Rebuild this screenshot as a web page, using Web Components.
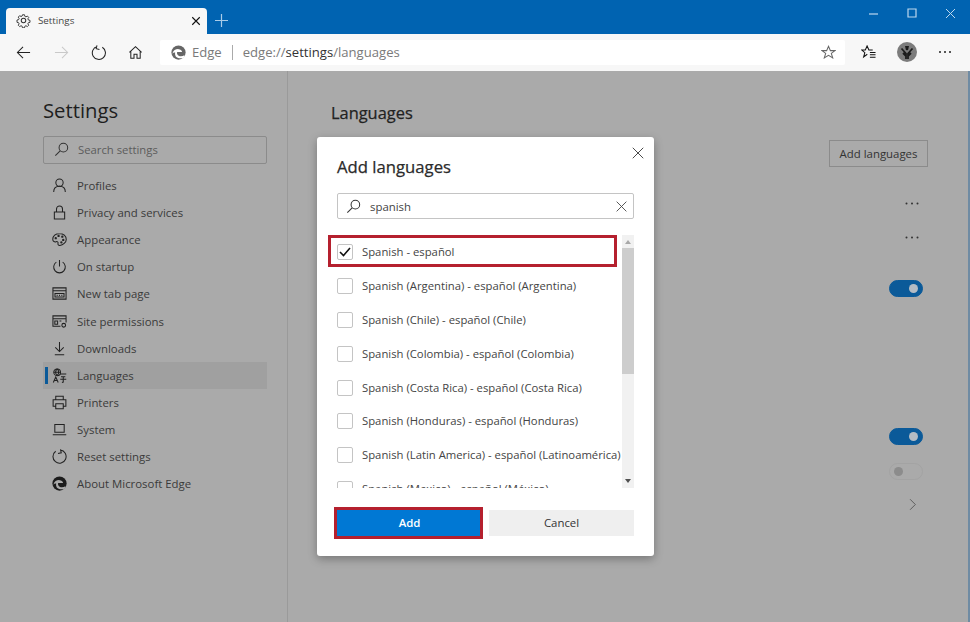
<!DOCTYPE html>
<html>
<head>
<meta charset="utf-8">
<title>Settings</title>
<style>
html, body { margin: 0; height: 100%; overflow: hidden; }
body { font-family: "Open Sans", "Noto Sans", sans-serif; background: #aaa; }
</style>
</head>
<body>
<edge-browser>
    <settings-nav slot="nav" heading="Settings">
        <nav-item icon="profile">Profiles</nav-item>
        <nav-item icon="lock">Privacy and services</nav-item>
        <nav-item icon="palette">Appearance</nav-item>
        <nav-item icon="power">On startup</nav-item>
        <nav-item icon="newtab">New tab page</nav-item>
        <nav-item icon="site">Site permissions</nav-item>
        <nav-item icon="download">Downloads</nav-item>
        <nav-item icon="language" selected>Languages</nav-item>
        <nav-item icon="printer">Printers</nav-item>
        <nav-item icon="system">System</nav-item>
        <nav-item icon="reset">Reset settings</nav-item>
        <nav-item icon="edge">About Microsoft Edge</nav-item>
    </settings-nav>
    <languages-panel slot="main"></languages-panel>
    <add-dialog slot="dialog">
        <lang-row checked marked>Spanish - español</lang-row>
        <lang-row>Spanish (Argentina) - español (Argentina)</lang-row>
        <lang-row>Spanish (Chile) - español (Chile)</lang-row>
        <lang-row>Spanish (Colombia) - español (Colombia)</lang-row>
        <lang-row>Spanish (Costa Rica) - español (Costa Rica)</lang-row>
        <lang-row>Spanish (Honduras) - español (Honduras)</lang-row>
        <lang-row>Spanish (Latin America) - español (Latinoamérica)</lang-row>
        <lang-row>Spanish (Mexico) - español (México)</lang-row>
    </add-dialog>
</edge-browser>

<script>
const icons = {
    gear: '<circle cx="8" cy="8" r="2.4"/><path d="M6.8 1.2h2.4l.4 1.9 1.3.6 1.7-1 1.6 1.7-1 1.6.6 1.4 1.9.4v2.4l-1.9.4-.6 1.3 1 1.7-1.6 1.6-1.7-1-1.3.6-.4 1.9H6.8l-.4-1.9-1.3-.6-1.7 1-1.6-1.6 1-1.7-.6-1.3-1.9-.4V7.4l1.9-.4.6-1.4-1-1.6 1.6-1.7 1.7 1 1.3-.6z" transform="translate(.8 .8) scale(.9)"/>',
    back: '<path d="M15 8H1.5M7.5 2 1.5 8l6 6"/>',
    forward: '<path d="M1 8h13.5M8.5 2l6 6-6 6"/>',
    refresh: '<path d="M10.6 1.6A7 7 0 1 1 5 2.2M4.6 1v3.6H8.2" transform="rotate(14 8 8)"/>',
    home: '<path d="M1.5 7.8 8 1.8l6.5 6M3 6.8v7.4h3.4v-4.4h3.2v4.4H13V6.8"/>',
    star: '<path d="M8 1.4 10 6h4.9l-3.9 3 1.5 4.800L8 11l-4.500 2.800L5 9 1.100 6H6z"/>',
    favorites: '<path d="M12.500 5.400H8.400L6.500 1 4.600 5.400H.8l3.300 2.700-1.300 4.600 3.900-2.800"/><path d="M9.500 8h6M9.500 10.500h6M9.500 13h6"/>',
    close: '<path d="m2 2 12 12M14 2 2 14"/>',
    search: '<circle cx="10" cy="6" r="4.600"/><path d="M6.600 9.400 1.400 14.600"/>',
    profile: '<circle cx="8" cy="5" r="3.900"/><path d="M1.800 15c0-3.600 2.400-6.200 6.200-6.200s6.200 2.600 6.200 6.200"/>',
    lock: '<path d="M2.500 7.500h11v7.500h-11zM4.800 7.500V4.200a3.200 3.200 0 0 1 6.400 0v3.300"/>',
    palette: '<path d="M8 1.500C3.800 1.500.8 4.200.8 7.600c0 2.600 2.200 3.400 3.600 2.800 1.200-.5 2.400.2 2 1.600-.4 1.400.6 2.500 2 2.300 3.200-.4 6.800-3 6.800-6.400 0-3.600-3-6.400-7.200-6.400z"/><circle cx="4" cy="6.600" r=".7"/><circle cx="7" cy="4.200" r=".7"/><circle cx="11" cy="5" r=".7"/><circle cx="12" cy="8.400" r=".7"/><circle cx="10" cy="11" r=".7"/>',
    power: '<path d="M8 1v7M4.600 3.400a6.200 6.200 0 1 0 6.800 0"/>',
    newtab: '<path d="M1 2h14v12H1zM1 5h14M3.200 8h9.600v3.800H3.200z"/><path d="M5 10h1M7.500 10h1M10 10h1"/>',
    site: '<path d="M9 13H1V2h14v7M1 5h14M3 7.500h3v3.500H3zM8 7.500h2"/><circle cx="12.500" cy="12" r="2"/>',
    download: '<path d="M8 1v10M3.500 6.800 8 11.200l4.500-4.400M3 14.600h10"/>',
    language: '<circle cx="5.500" cy="4.600" r="3.600"/><path d="M2 4.600h7M5.500 1c-2 2-2 5 0 7.200M5.500 1c2 2 2 5 0 7.200M1.400 15.400 4 9.600l2.600 5.800M2.400 13.400h3.200M8.400 6.400h6.800M9.600 9.400h4.600M8.800 12h6.400M12 9.400v5.600l-1.400.4"/>',
    printer: '<path d="M4 5V1.400h8V5M4 12H1.200V5h13.600v7H12M4 9.400h8v5.200H4z"/>',
    system: '<path d="M3 2.600h10v8.400H3zM.8 13.600h14.400"/>',
    reset: '<path d="M5.400 1.600A7 7 0 1 0 10.600 1.600M10.800 1v3.600H7.200" transform="rotate(-14 8 8)"/>',
    chevron: '<path d="m5 1.500 6.500 6.500L5 14.500"/>'
};

function svgIcon(name, size, stroke, width) {
    return `<svg viewBox="0 0 16 16" width="${size}" height="${size}" fill="none" stroke="${stroke || 'currentColor'}" stroke-width="${width || 1.1}" aria-hidden="true">${icons[name]}</svg>`;
}

function edgeLogo(size, color, cut) {
    return `<svg viewBox="0 0 16 16" width="${size}" height="${size}" aria-hidden="true"><circle cx="8" cy="8" r="7.6" fill="${color}"/><path d="M1.4 9.2C2.4 5.6 5.4 4.2 8 4.4c2.4.2 3.8 1.6 3.8 3H6.6c-.8 2.4 1.2 4.6 4 4.6 1.4 0 2.6-.4 3.6-1v2.2C10 15.4 3.4 14.2 4.4 8 3 8 2 8.4 1.4 9.2z" fill="${cut}"/></svg>`;
}

const browserTemplate = document.createElement('template');
browserTemplate.innerHTML = `
    <style>
    :host { display: flex; flex-direction: column; position: relative; width: 970px; height: 622px; overflow: hidden; }
    .tabs { display: flex; align-items: flex-end; height: 34px; background: #0063b1; flex: none; }
    .tab { display: flex; align-items: center; box-sizing: border-box; width: 201px; height: 26px; margin-left: 6px; padding: 0 6px 1px 10px; background: #f7f7f7; border-radius: 4px 4px 0 0; color: #444; font-size: 9.8px; }
    .tab .gear { display: flex; flex: none; margin-right: 7px; }
    .tab .name { flex: 1; }
    .tab .x { display: flex; flex: none; }
    .new { display: flex; margin: 0 0 7px 8px; }
    .win { display: flex; gap: 28px; margin: 0 14px 15px auto; }
    .bar { display: flex; align-items: center; height: 37px; padding-bottom: 1px; box-sizing: border-box; background: #f7f7f7; color: #222; flex: none; }
    .bar .btn { display: flex; justify-content: center; width: 37.4px; flex: none; }
    .bar .btn.first { margin-left: 5px; }
    .bar .btn.right { width: 38px; }
    .address { display: flex; align-items: center; box-sizing: border-box; width: 685px; height: 25px; margin: 0 5px 0 5.4px; padding: 0 9px 0 11px; background: #fff; border-radius: 2px; color: #7a7a7a; font-size: 13.1px; white-space: nowrap; }
    .address .logo { display: flex; margin-right: 6px; }
    .address .star { display: flex; }
    .address .sep { width: 1px; height: 15px; margin: 0 10px; background: #aaa; }
    .address b { font-weight: 400; color: #333; }
    .address .url { flex: 1; }
    .content { display: flex; flex: 1; min-height: 0; background: #aaa; border-right: 2px solid #6f8ba3; }
    </style>
    <div class="tabs">
        <div class="tab">
            <span class="gear" id="gear"></span><span class="name">Settings</span><span class="x" id="x"></span>
        </div>
        <div class="new" id="plus"></div>
        <div class="win" id="win"></div>
    </div>
    <div class="bar">
        <div class="btn first" id="back"></div>
        <div class="btn" id="forward"></div>
        <div class="btn" id="refresh"></div>
        <div class="btn" id="home"></div>
        <div class="address">
            <span class="logo" id="logo"></span><span>Edge</span><span class="sep"></span>
            <span class="url">edge://<b>settings</b>/languages</span>
            <span class="star" id="star"></span>
        </div>
        <div class="btn right" id="fav"></div>
        <div class="btn right" id="avatar"></div>
        <div class="btn right" id="menu"></div>
    </div>
    <div class="content">
        <slot name="nav"></slot>
        <slot name="main"></slot>
    </div>
    <slot name="dialog"></slot>
`;

class EdgeBrowser extends HTMLElement {
    constructor() {
        super();

        this.attachShadow({ mode: 'open' });
        this.shadowRoot.append(browserTemplate.content.cloneNode(true));

        const root = this.shadowRoot;
        root.getElementById('gear').innerHTML = svgIcon('gear', 15, '#333');
        root.getElementById('x').innerHTML = svgIcon('close', 10, '#111', 1.8);
        root.getElementById('plus').innerHTML = '<svg width="13" height="13" viewBox="0 0 13 13" fill="none" stroke="#a9cce8" stroke-width="1.2"><path d="M6.5 0v13M0 6.5h13"/></svg>';
        root.getElementById('win').innerHTML =
            '<svg width="11" height="11" fill="none" stroke="#bcd8ee" stroke-width="1.2"><path d="M1 6h9"/></svg>' +
            '<svg width="10" height="10" fill="none" stroke="#bcd8ee" stroke-width="1.2"><path d="M1 1h8v8H1z"/></svg>' +
            '<svg width="11" height="11" fill="none" stroke="#bcd8ee" stroke-width="1"><path d="m1 1 9 9M10 1l-9 9"/></svg>';
        root.getElementById('back').innerHTML = svgIcon('back', 15);
        root.getElementById('forward').innerHTML = svgIcon('forward', 15, '#c9c9c9');
        root.getElementById('refresh').innerHTML = svgIcon('refresh', 15);
        root.getElementById('home').innerHTML = svgIcon('home', 15);
        root.getElementById('logo').innerHTML = edgeLogo(15, '#666', '#fff');
        root.getElementById('star').innerHTML = svgIcon('star', 15, '#666');
        root.getElementById('fav').innerHTML = svgIcon('favorites', 15, '#111');
        root.getElementById('avatar').innerHTML = '<svg width="20" height="20" viewBox="0 0 20 20" style="display:block" fill="none"><circle cx="10" cy="10" r="10" fill="#7c7c7c"/><path d="M4.500 6.500 9 11.500V17M15.500 6.500 11 11.500V17M6 11l3 3M14 11l-3 3" stroke="#1c1c1c" stroke-width="1.800"/><path d="M8 4h4l-.8 3.500-1.200 1-1.200-1z" fill="#1c1c1c"/></svg>';
        root.getElementById('menu').innerHTML = '<svg width="14" height="4"><circle cx="2" cy="2" r="1" fill="#222"/><circle cx="7" cy="2" r="1" fill="#222"/><circle cx="12" cy="2" r="1" fill="#222"/></svg>';
    }
}

const navTemplate = document.createElement('template');
navTemplate.innerHTML = `
    <style>
    :host { display: block; box-sizing: border-box; width: 288px; height: 100%; padding: 24px 20px 0 43px; border-right: 1px solid #9a9a9a; }
    h1 { margin: 0 0 11px; font-size: 20.3px; font-weight: 400; line-height: 30px; color: #1e1e1e; }
    .search { display: flex; align-items: center; box-sizing: border-box; height: 28px; margin-bottom: 8px; padding: 0 0 1px 10px; border: 1px solid #8b8b8b; border-radius: 2px; color: #5c5c5c; font-size: 11.3px; }
    .search span { display: flex; margin-right: 9px; color: #333; }
    </style>
    <h1></h1>
    <div class="search"><span></span>Search settings</div>
    <slot></slot>
`;

class SettingsNav extends HTMLElement {
    constructor() {
        super();

        this.attachShadow({ mode: 'open' });
        this.shadowRoot.append(navTemplate.content.cloneNode(true));

        this.shadowRoot.querySelector('h1').textContent = this.getAttribute('heading');
        this.shadowRoot.querySelector('.search span').innerHTML = svgIcon('search', 15);
    }
}

const itemTemplate = document.createElement('template');
itemTemplate.innerHTML = `
    <style>
    :host { display: flex; align-items: center; position: relative; height: 27.1px; padding-left: 9px; color: #3a3a3a; font-size: 11.4px; }
    :host([selected]) { background: #a0a0a0; }
    :host([selected])::before { content: ''; position: absolute; left: 2px; top: 5px; width: 2.5px; height: 17px; background: #0b5a99; }
    .icon { display: flex; width: 15px; margin-right: 10px; color: #222; }
    </style>
    <span class="icon"></span><slot></slot>
`;

class NavItem extends HTMLElement {
    constructor() {
        super();

        this.attachShadow({ mode: 'open' });
        this.shadowRoot.append(itemTemplate.content.cloneNode(true));

        const name = this.getAttribute('icon');
        this.shadowRoot.querySelector('.icon').innerHTML =
            name === 'edge' ? edgeLogo(15, '#1c1c1c', '#aaa') : svgIcon(name, 15);
    }
}

const panelTemplate = document.createElement('template');
panelTemplate.innerHTML = `
    <style>
    :host { display: flex; flex-direction: column; flex: 1; box-sizing: border-box; padding: 28px 40px 0 43px; color: #2a2a2a; }
    h2 { margin: 0; font-size: 16.4px; font-weight: 400; -webkit-text-stroke: .25px #222; line-height: 28px; color: #222; }
    .add { align-self: flex-end; box-sizing: border-box; width: 99px; height: 27px; margin-top: 13px; border: 1px solid #8b8b8b; font-size: 11.4px; line-height: 26px; text-align: center; color: #333; }
    .end { display: flex; justify-content: flex-end; }
    .dots { align-items: center; height: 10px; padding-right: 9px; }
    .tog { padding-right: 5px; }
    .chev { color: #555; padding-right: 9px; }
    </style>
    <h2>Languages</h2>
    <div class="add">Add languages</div>
    <div class="end dots" style="margin-top:31px"><svg width="14" height="3"><circle cx="1.500" cy="1.500" r="1" fill="#333"/><circle cx="7" cy="1.500" r="1" fill="#333"/><circle cx="12.500" cy="1.500" r="1" fill="#333"/></svg></div>
    <div class="end dots" style="margin-top:24px"><svg width="14" height="3"><circle cx="1.500" cy="1.500" r="1" fill="#333"/><circle cx="7" cy="1.500" r="1" fill="#333"/><circle cx="12.500" cy="1.500" r="1" fill="#333"/></svg></div>
    <div class="end tog" style="margin-top:38px"><toggle-switch on></toggle-switch></div>
    <div class="end tog" style="margin-top:131px"><toggle-switch on></toggle-switch></div>
    <div class="end tog" style="margin-top:18px"><toggle-switch></toggle-switch></div>
    <div class="end chev" style="margin-top:18px" id="chev"></div>
`;

class LanguagesPanel extends HTMLElement {
    constructor() {
        super();

        this.attachShadow({ mode: 'open' });
        this.shadowRoot.append(panelTemplate.content.cloneNode(true));

        this.shadowRoot.getElementById('chev').innerHTML = svgIcon('chevron', 13);
    }
}

class ToggleSwitch extends HTMLElement {
    constructor() {
        super();

        this.attachShadow({ mode: 'open' }).innerHTML = `
            <style>
            :host { display: flex; align-items: center; box-sizing: border-box; width: 34px; height: 17px; padding: 0 4px; border-radius: 9px; border: 1px solid #a3a3a3; }
            :host([on]) { justify-content: flex-end; background: #0b5a99; border-color: #0b5a99; }
            i { display: block; width: 9px; height: 9px; border-radius: 50%; background: #8c8c8c; }
            :host([on]) i { background: #b4bcc4; }
            </style>
            <i></i>
        `;
    }
}

const dialogTemplate = document.createElement('template');
dialogTemplate.innerHTML = `
    <style>
    :host { display: flex; flex-direction: column; position: absolute; left: 317px; top: 137px; box-sizing: border-box; width: 337px; height: 419px; padding: 0 20px 20px; background: #fff; border-radius: 3px; box-shadow: 0 3px 10px rgba(0,0,0,.3); color: #444; }
    .x { position: absolute; right: 9px; top: 9px; display: flex; color: #444; }
    h3 { margin: 16px 0 12px; font-size: 16.7px; font-weight: 400; -webkit-text-stroke: .25px #2b2b2b; line-height: 28px; color: #2b2b2b; }
    .search { display: flex; align-items: center; box-sizing: border-box; width: 297px; height: 26px; padding: 1px 5px 0 8px; border: 1px solid #c4c4c4; border-radius: 2px; font-size: 11.4px; color: #444; }
    .search .s { display: flex; margin-right: 9px; color: #333; }
    .search .t { flex: 1; }
    .search .c { display: flex; color: #444; }
    .list { display: flex; width: 297px; height: 253px; margin-top: 16px; clip-path: inset(0 0 0 -12px); }
    .rows { flex: 1; min-width: 0; }
    .scroll { display: flex; flex-direction: column; width: 12px; flex: none; background: #f1f1f1; align-items: center; }
    .up, .down { width: 0; height: 0; border-left: 3.5px solid transparent; border-right: 3.5px solid transparent; margin: 5px 0; }
    .up { border-bottom: 4px solid #a8a8a8; }
    .down { border-top: 4px solid #505050; margin-top: auto; }
    .thumb { width: 12px; height: 126px; background: #cdcdcd; margin-top: -1px; }
    .buttons { display: flex; gap: 7px; width: 297px; margin-top: 22px; }
    .add, .cancel { flex: 1; height: 26px; font-size: 11.4px; line-height: 26px; text-align: center; }
    .add { position: relative; background: #0078d4; color: #fff; font-weight: 600; }
    .add::after { content: ''; position: absolute; inset: -3px -1px -3px -3px; border: 3px solid #b5202e; }
    .cancel { background: #efefef; color: #333; }
    </style>
    <span class="x" id="x"></span>
    <h3>Add languages</h3>
    <div class="search"><span class="s" id="s"></span><span class="t">spanish</span><span class="c" id="c"></span></div>
    <div class="list">
        <div class="rows"><slot></slot></div>
        <div class="scroll"><i class="up"></i><i class="thumb"></i><i class="down"></i></div>
    </div>
    <div class="buttons"><div class="add">Add</div><div class="cancel">Cancel</div></div>
`;

class AddDialog extends HTMLElement {
    constructor() {
        super();

        this.attachShadow({ mode: 'open' });
        this.shadowRoot.append(dialogTemplate.content.cloneNode(true));

        this.shadowRoot.getElementById('x').innerHTML = svgIcon('close', 14);
        this.shadowRoot.getElementById('s').innerHTML = svgIcon('search', 15);
        this.shadowRoot.getElementById('c').innerHTML = svgIcon('close', 13);
    }
}

const rowTemplate = document.createElement('template');
rowTemplate.innerHTML = `
    <style>
    :host { display: flex; align-items: center; position: relative; box-sizing: border-box; height: 33.8px; font-size: 11.3px; color: #444; white-space: nowrap; }
    :host([marked])::after { content: ''; position: absolute; left: -9px; right: 5px; top: 0; bottom: 2px; border: 3px solid #b5202e; }
    .box { display: flex; align-items: center; justify-content: center; box-sizing: border-box; width: 16px; height: 16px; margin: 1px 9px 0 0; border: 1px solid #c4c4c4; border-radius: 2px; flex: none; }
    svg { display: none; }
    :host([checked]) svg { display: block; }
    </style>
    <span class="box"><svg width="12" height="10" viewBox="0 0 12 10" fill="none" stroke="#111" stroke-width="1.6"><path d="m1 5 3.500 3.500L11 1"/></svg></span><slot></slot>
`;

class LangRow extends HTMLElement {
    constructor() {
        super();

        this.attachShadow({ mode: 'open' });
        this.shadowRoot.append(rowTemplate.content.cloneNode(true));
    }
}

window.customElements.define('edge-browser', EdgeBrowser);
window.customElements.define('settings-nav', SettingsNav);
window.customElements.define('nav-item', NavItem);
window.customElements.define('languages-panel', LanguagesPanel);
window.customElements.define('toggle-switch', ToggleSwitch);
window.customElements.define('add-dialog', AddDialog);
window.customElements.define('lang-row', LangRow);
</script>
</body>
</html>
